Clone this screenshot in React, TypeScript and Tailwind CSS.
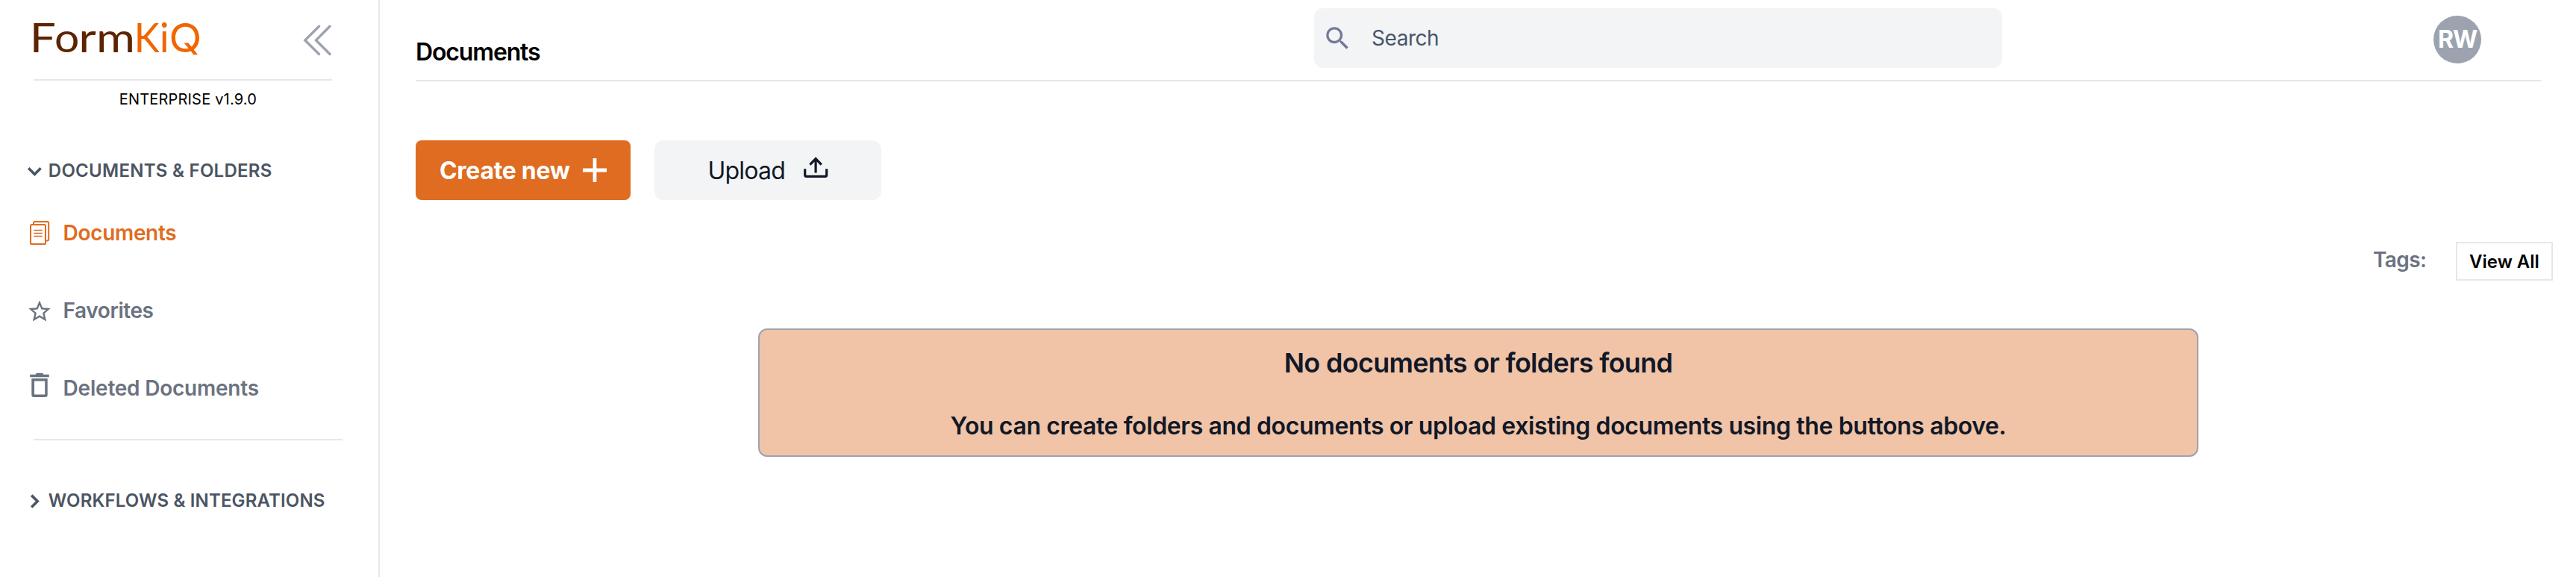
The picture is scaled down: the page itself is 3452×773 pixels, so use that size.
import type { ReactNode } from 'react';

const logoLetters = [
  { char: 'F', x: 39.8, stretch: 1.15, color: '#5c2400', font: 'Lato, sans-serif' },
  { char: 'o', x: 73, stretch: 1.09, color: '#5c2400', font: 'Lato, sans-serif' },
  { char: 'r', x: 105.2, stretch: 1.2, color: '#5c2400', font: 'Lato, sans-serif' },
  { char: 'm', x: 129, stretch: 1.17, color: '#5c2400', font: 'Lato, sans-serif' },
  { char: 'K', x: 179.8, stretch: 0.95, color: '#f26500', font: 'Lato, sans-serif' },
  { char: 'i', x: 213.7, stretch: 1, color: '#f26500', font: 'Lato, sans-serif' },
  { char: 'Q', x: 226.2, stretch: 1.07, color: '#f26500', font: 'Inter, sans-serif' },
];

function Logo() {
  return (
    <svg width="250" height="100" viewBox="35 0 250 100" className="-ml-[10px]" fontSize="54">
      {logoLetters.map((l) => (
        <text key={l.char} transform={`translate(${l.x} 70) scale(${l.stretch} 1)`} fill={l.color} fontFamily={l.font}>{l.char}</text>
      ))}
    </svg>
  );
}

function CollapseIcon() {
  return (
    <svg width="38" height="42" viewBox="406 33.5 38 42" fill="none" stroke="#9ca3af" strokeWidth="3.4" strokeLinecap="round">
      <path d="M427.5 35.8 408.8 54.4 427.5 73M442 35.8 423.5 54.4 442 73" />
    </svg>
  );
}

function DocumentsIcon() {
  return (
    <svg width="30" height="34" viewBox="38 295 30 34" fill="none" stroke="#df6c20" strokeWidth="2">
      <rect x="41" y="301" width="20" height="26" rx="1.6" />
      <path d="M45 300.5V299a2 2 0 0 1 2-2H63.2a2 2 0 0 1 2 2V320.4a2 2 0 0 1-2 2H61.5" />
      <path strokeWidth="1.5" d="M45.3 308.5H56.7M45.3 312.4H56.7M45.3 316.4H56.7" />
    </svg>
  );
}

function StarIcon() {
  return (
    <svg width="30" height="29" viewBox="1.8 1.8 20.4 19.5" fill="#6b7280">
      <path d="M22 9.24l-7.19-.62L12 2 9.19 8.63 2 9.24l5.46 4.73L5.82 21 12 17.27 18.18 21l-1.63-7.03L22 9.24zM12 15.4l-3.76 2.27 1-4.28-3.32-2.88 4.38-.38L12 6.1l1.71 4.04 4.38.38-3.32 2.88 1 4.28L12 15.4z" />
    </svg>
  );
}

function TrashIcon() {
  return (
    <svg width="30" height="34" viewBox="38 499 30 34" fill="#6b7280">
      <path d="M40.2 501.8h7.3l1.6-2h7.8l1.6 2h7.3v3.4H40.2z" />
      <path fillRule="evenodd" d="M42.3 507h21.4v22a3 3 0 0 1-3 3H45.3a3 3 0 0 1-3-3zM46 510.6v18h14.2v-18z" />
    </svg>
  );
}

function SearchIcon() {
  return (
    <svg width="30" height="30" viewBox="2.9 2.9 17.7 17.7" fill="#747a96">
      <path d="M15.5 14h-.79l-.28-.27A6.471 6.471 0 0 0 16 9.5 6.5 6.5 0 1 0 9.5 16c1.61 0 3.09-.59 4.23-1.57l.27.28v.79l5 4.99L20.49 19l-4.99-5zm-6 0C7.01 14 5 11.99 5 9.5S7.01 5 9.5 5 14 7.01 14 9.5 11.99 14 9.5 14z" />
    </svg>
  );
}

function UploadIcon() {
  return (
    <svg width="34" height="30" viewBox="1076 209 34 30" fill="none" stroke="#111827" strokeWidth="3.2">
      <path d="M1078.7 226.3V234.5a1.8 1.8 0 0 0 1.8 1.8H1105.9a1.8 1.8 0 0 0 1.8-1.8V226.3" />
      <path d="M1085.4 220.6 1093.1 212.6 1100.8 220.6M1093.1 213V231.6" />
    </svg>
  );
}

function SectionTitle({ open, children }: { open?: boolean; children: ReactNode }) {
  return (
    <div className="flex h-[63px] items-center pl-[36px] text-[24px] font-semibold text-[#4b5563]">
      <svg width="28" height="24" viewBox="0 0 28 24" fill="none" stroke="#4b5563" strokeWidth="3.6">
        {open ? <path d="M2.2 8.2 10.4 16.4 18.6 8.2" /> : <path d="M6.2 4.6 14.2 12.5 6.2 20.6" />}
      </svg>
      <div className="ml-[0.8px]">{children}</div>
    </div>
  );
}

function NavItem({ icon, children }: { icon: ReactNode; children: ReactNode }) {
  return (
    <div className="flex h-[104px] items-center gap-[16.6px] pl-[38px] text-[28px] font-semibold text-[#6b7280]">
      {icon}
      {children}
    </div>
  );
}

function Sidebar() {
  return (
    <aside className="h-full w-[509px] shrink-0 border-r-2 border-[#e5e7eb]">
      <div className="ml-[45px] flex h-[108px] w-[400px] items-start justify-between border-b-2 border-[#e5e7eb]">
        <Logo />
        <div className="mr-px pt-[33px]"><CollapseIcon /></div>
      </div>
      <div className="flex h-[50px] items-center pl-[159.7px] text-[20px] tracking-[0.19px] text-black">ENTERPRISE v1.9.0</div>
      <div className="pt-[39px]">
        <SectionTitle open><span className="tracking-[0.27px]">DOCUMENTS &amp; FOLDERS</span></SectionTitle>
      </div>
      <nav>
        <NavItem icon={<DocumentsIcon />}><span className="tracking-[-0.33px] text-[#df6c20]">Documents</span></NavItem>
        <NavItem icon={<StarIcon />}><span className="tracking-[-0.42px]">Favorites</span></NavItem>
        <NavItem icon={<div className="-mt-2"><TrashIcon /></div>}><span className="tracking-[-0.22px]">Deleted Documents</span></NavItem>
      </nav>
      <div className="mt-4 ml-[45px] h-[2px] w-[414px] bg-[#e5e7eb]" />
      <div className="pt-[49px]">
        <SectionTitle><span className="tracking-[0.15px]">WORKFLOWS &amp; INTEGRATIONS</span></SectionTitle>
      </div>
    </aside>
  );
}

function Header() {
  return (
    <header className="ml-[48px] flex h-[109px] w-[2848px] items-start border-b-2 border-[#e5e7eb]">
      <h1 className="w-[1204px] pt-[50px] text-[32px] leading-[40px] font-semibold tracking-[-1.15px] text-black">Documents</h1>
      <div className="mt-[11px] flex h-[80px] w-[922px] items-center rounded-[12px] bg-[#f3f4f6] pl-[16px]">
        <SearchIcon />
        <span className="pl-[31px] text-[28px] tracking-[-0.45px] text-[#475569]">Search</span>
      </div>
      <div className="mt-[21px] ml-[578px] flex size-[64px] items-center justify-center rounded-full bg-[#9ca3af] text-[32px] font-bold tracking-[-1px] text-white">RW</div>
    </header>
  );
}

export default function App() {
  return (
    <div className="flex h-[773px] w-[3452px] overflow-hidden bg-white font-['Inter',sans-serif]">
      <Sidebar />
      <main className="w-[2943px]">
        <Header />
        <div className="mt-[79px] ml-[48px] flex gap-8">
          <button className="flex h-[80px] w-[288px] items-center justify-between rounded-[8px] bg-[#df6c20] px-[32px] text-[32px] font-bold tracking-[-0.3px] text-white">
            <span className="pt-[2px] whitespace-nowrap">Create new</span>
            <svg className="shrink-0" width="32" height="32" viewBox="0 0 32 32" stroke="white" strokeWidth="4.8"><path d="M16 0V32M0 16H32" /></svg>
          </button>
          <button className="flex h-[80px] w-[304px] items-center rounded-[12px] bg-[#f3f4f6] pl-[71.5px] text-[32px] tracking-[-0.8px] text-[#111827]">
            <span className="w-[127.5px] pt-[2px] text-left">Upload</span>
            <span className="-mt-2"><UploadIcon /></span>
          </button>
        </div>
        <div className="mt-[56px] mr-[31px] flex h-[52px] items-center justify-end">
          <span className="w-[111px] pb-[4px] text-[28px] font-semibold tracking-[-0.6px] text-[#6b7280]">Tags:</span>
          <button className="h-[52px] w-[130px] border-2 border-[#e5e7eb] text-[24px] leading-[49px] font-semibold text-black">View All</button>
        </div>
        <div className="mt-[64px] ml-[507px] flex h-[172px] w-[1930px] flex-col items-center rounded-[12px] border-2 border-[#9ca3af] bg-[#f1c4a7] pt-[24px] text-[#111827]">
          <div className="text-[36px] leading-[40px] font-semibold tracking-[-0.7px]">No documents or folders found</div>
          <div className="mt-[45px] text-[32px] leading-[40px] font-semibold tracking-[-0.385px]">You can create folders and documents or upload existing documents using the buttons above.</div>
        </div>
      </main>
    </div>
  );
}
